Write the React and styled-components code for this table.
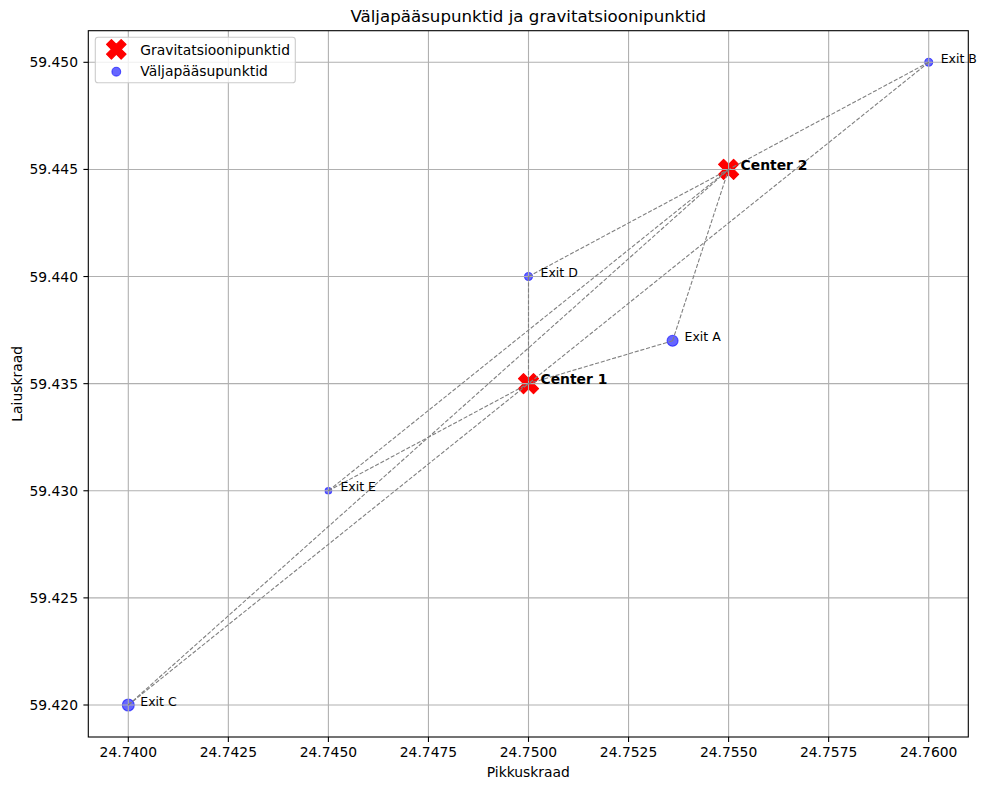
import React from "react";
import styled, { createGlobalStyle } from "styled-components";

const GlobalStyle = createGlobalStyle`
  html, body {
    margin: 0;
    padding: 0;
    background: #ffffff;
  }
`;

// axes box in page pixels
const AX = { left: 88.3, right: 968.3, top: 30.7, bottom: 737 };
const px = (lon) => 128.3 + (lon - 24.74) * 40020;
const py = (lat) => 705 - (lat - 59.42) * 21423;

const exits = [
  { name: "Exit A", lon: 24.7536, lat: 59.437, r: 5.5 },
  { name: "Exit B", lon: 24.76, lat: 59.45, r: 4 },
  { name: "Exit C", lon: 24.74, lat: 59.42, r: 6 },
  { name: "Exit D", lon: 24.75, lat: 59.44, r: 4 },
  { name: "Exit E", lon: 24.745, lat: 59.43, r: 3.3 },
];

const centers = [
  { name: "Center 1", lon: 24.75, lat: 59.435 },
  { name: "Center 2", lon: 24.755, lat: 59.445 },
];

const xTicks = [0, 1, 2, 3, 4, 5, 6, 7, 8].map((i) => 24.74 + i * 0.0025);
const yTicks = [0, 1, 2, 3, 4, 5, 6].map((i) => 59.42 + i * 0.005);

// matplotlib's filled "X" marker, size in px
const xMarker = (cx, cy, size) => {
  const s = size / 4;
  return [
    [-1, -2], [0, -1], [1, -2], [2, -1], [1, 0], [2, 1],
    [1, 2], [0, 1], [-1, 2], [-2, 1], [-1, 0], [-2, -1],
  ]
    .map(([a, b]) => `${(cx + a * s).toFixed(2)},${(cy + b * s).toFixed(2)}`)
    .join(" ");
};

const Figure = styled.div`
  width: 986px;
  height: 790px;
  background: #ffffff;
  font-family: "DejaVu Sans", "Liberation Sans", sans-serif;
`;

const Canvas = styled.svg`
  display: block;
  width: 986px;
  height: 790px;
`;

const Title = styled.text`
  font-size: 16.67px;
  fill: #000;
  text-anchor: middle;
`;

const AxisLabel = styled.text`
  font-size: 13.89px;
  fill: #000;
  text-anchor: middle;
`;

const TickLabel = styled.text`
  font-size: 13.89px;
  fill: #000;
  text-anchor: ${({ $anchor }) => $anchor || "middle"};
`;

const Tick = styled.line`
  stroke: #000;
  stroke-width: 1.1;
`;

const GridLine = styled.line`
  stroke: #b0b0b0;
  stroke-width: 1.1;
`;

const Spine = styled.rect`
  fill: none;
  stroke: #000;
  stroke-width: 1.1;
`;

const Link = styled.line`
  stroke: #808080;
  stroke-width: 1.1;
  stroke-dasharray: 4.1 1.8;
`;

const ExitDot = styled.circle`
  fill: #0000ff;
  fill-opacity: 0.6;
  stroke: #0000ff;
  stroke-opacity: 0.6;
  stroke-width: 1.1;
`;

const CenterMark = styled.polygon`
  fill: #ff0000;
  stroke: #ff0000;
  stroke-width: 1.2;
  stroke-linejoin: round;
`;

const PointLabel = styled.text`
  font-size: ${({ $bold }) => ($bold ? "13.89px" : "12.5px")};
  font-weight: ${({ $bold }) => ($bold ? 700 : 400)};
  fill: #000;
`;

const LegendBox = styled.rect`
  fill: #ffffff;
  fill-opacity: 0.8;
  stroke: #cccccc;
  stroke-width: 1.1;
`;

const LegendText = styled.text`
  font-size: 13.89px;
  fill: #000;
`;

const App = () => {
  const midX = (AX.left + AX.right) / 2;
  const midY = (AX.top + AX.bottom) / 2;

  return (
    <Figure>
      <GlobalStyle />
      <Canvas viewBox="0 0 986 790">
        <defs>
          <clipPath id="plot">
            <rect
              x={AX.left}
              y={AX.top}
              width={AX.right - AX.left}
              height={AX.bottom - AX.top}
            />
          </clipPath>
        </defs>

        <g clipPath="url(#plot)">
          {exits.map((e) => (
            <ExitDot key={e.name} cx={px(e.lon)} cy={py(e.lat)} r={e.r} />
          ))}
          {centers.map((c) => (
            <CenterMark key={c.name} points={xMarker(px(c.lon), py(c.lat), 20)} />
          ))}

          {xTicks.map((t) => (
            <GridLine key={t} x1={px(t)} x2={px(t)} y1={AX.top} y2={AX.bottom} />
          ))}
          {yTicks.map((t) => (
            <GridLine key={t} x1={AX.left} x2={AX.right} y1={py(t)} y2={py(t)} />
          ))}

          {exits.map((e) =>
            centers.map((c) => (
              <Link
                key={e.name + c.name}
                x1={px(e.lon)}
                y1={py(e.lat)}
                x2={px(c.lon)}
                y2={py(c.lat)}
              />
            ))
          )}
        </g>

        {exits.map((e) => (
          <PointLabel key={e.name} x={px(e.lon) + 12} y={py(e.lat) + 0.5}>
            {e.name}
          </PointLabel>
        ))}
        {centers.map((c) => (
          <PointLabel $bold key={c.name} x={px(c.lon) + 12} y={py(c.lat) + 0.5}>
            {c.name}
          </PointLabel>
        ))}

        <Spine
          x={AX.left}
          y={AX.top}
          width={AX.right - AX.left}
          height={AX.bottom - AX.top}
        />

        {xTicks.map((t) => (
          <g key={t}>
            <Tick x1={px(t)} x2={px(t)} y1={AX.bottom} y2={AX.bottom + 4.9} />
            <TickLabel x={px(t)} y={757}>
              {t.toFixed(4)}
            </TickLabel>
          </g>
        ))}
        {yTicks.map((t) => (
          <g key={t}>
            <Tick x1={AX.left - 4.9} x2={AX.left} y1={py(t)} y2={py(t)} />
            <TickLabel $anchor="end" x={78} y={py(t) + 5}>
              {t.toFixed(3)}
            </TickLabel>
          </g>
        ))}

        <Title x={midX} y={21.5}>
          Väljapääsupunktid ja gravitatsioonipunktid
        </Title>
        <AxisLabel x={midX} y={776.5}>
          Pikkuskraad
        </AxisLabel>
        <AxisLabel transform={`translate(21.7 ${midY}) rotate(-90)`} x={0} y={0}>
          Laiuskraad
        </AxisLabel>

        <LegendBox x={95.3} y={37.3} width={200} height={45.4} rx={2.8} />
        <CenterMark points={xMarker(116.3, 49.3, 19.5)} />
        <ExitDot cx={116.3} cy={71.7} r={4.4} />
        <LegendText x={140.3} y={54.6}>
          Gravitatsioonipunktid
        </LegendText>
        <LegendText x={140.3} y={76}>
          Väljapääsupunktid
        </LegendText>
      </Canvas>
    </Figure>
  );
};

export default App;
